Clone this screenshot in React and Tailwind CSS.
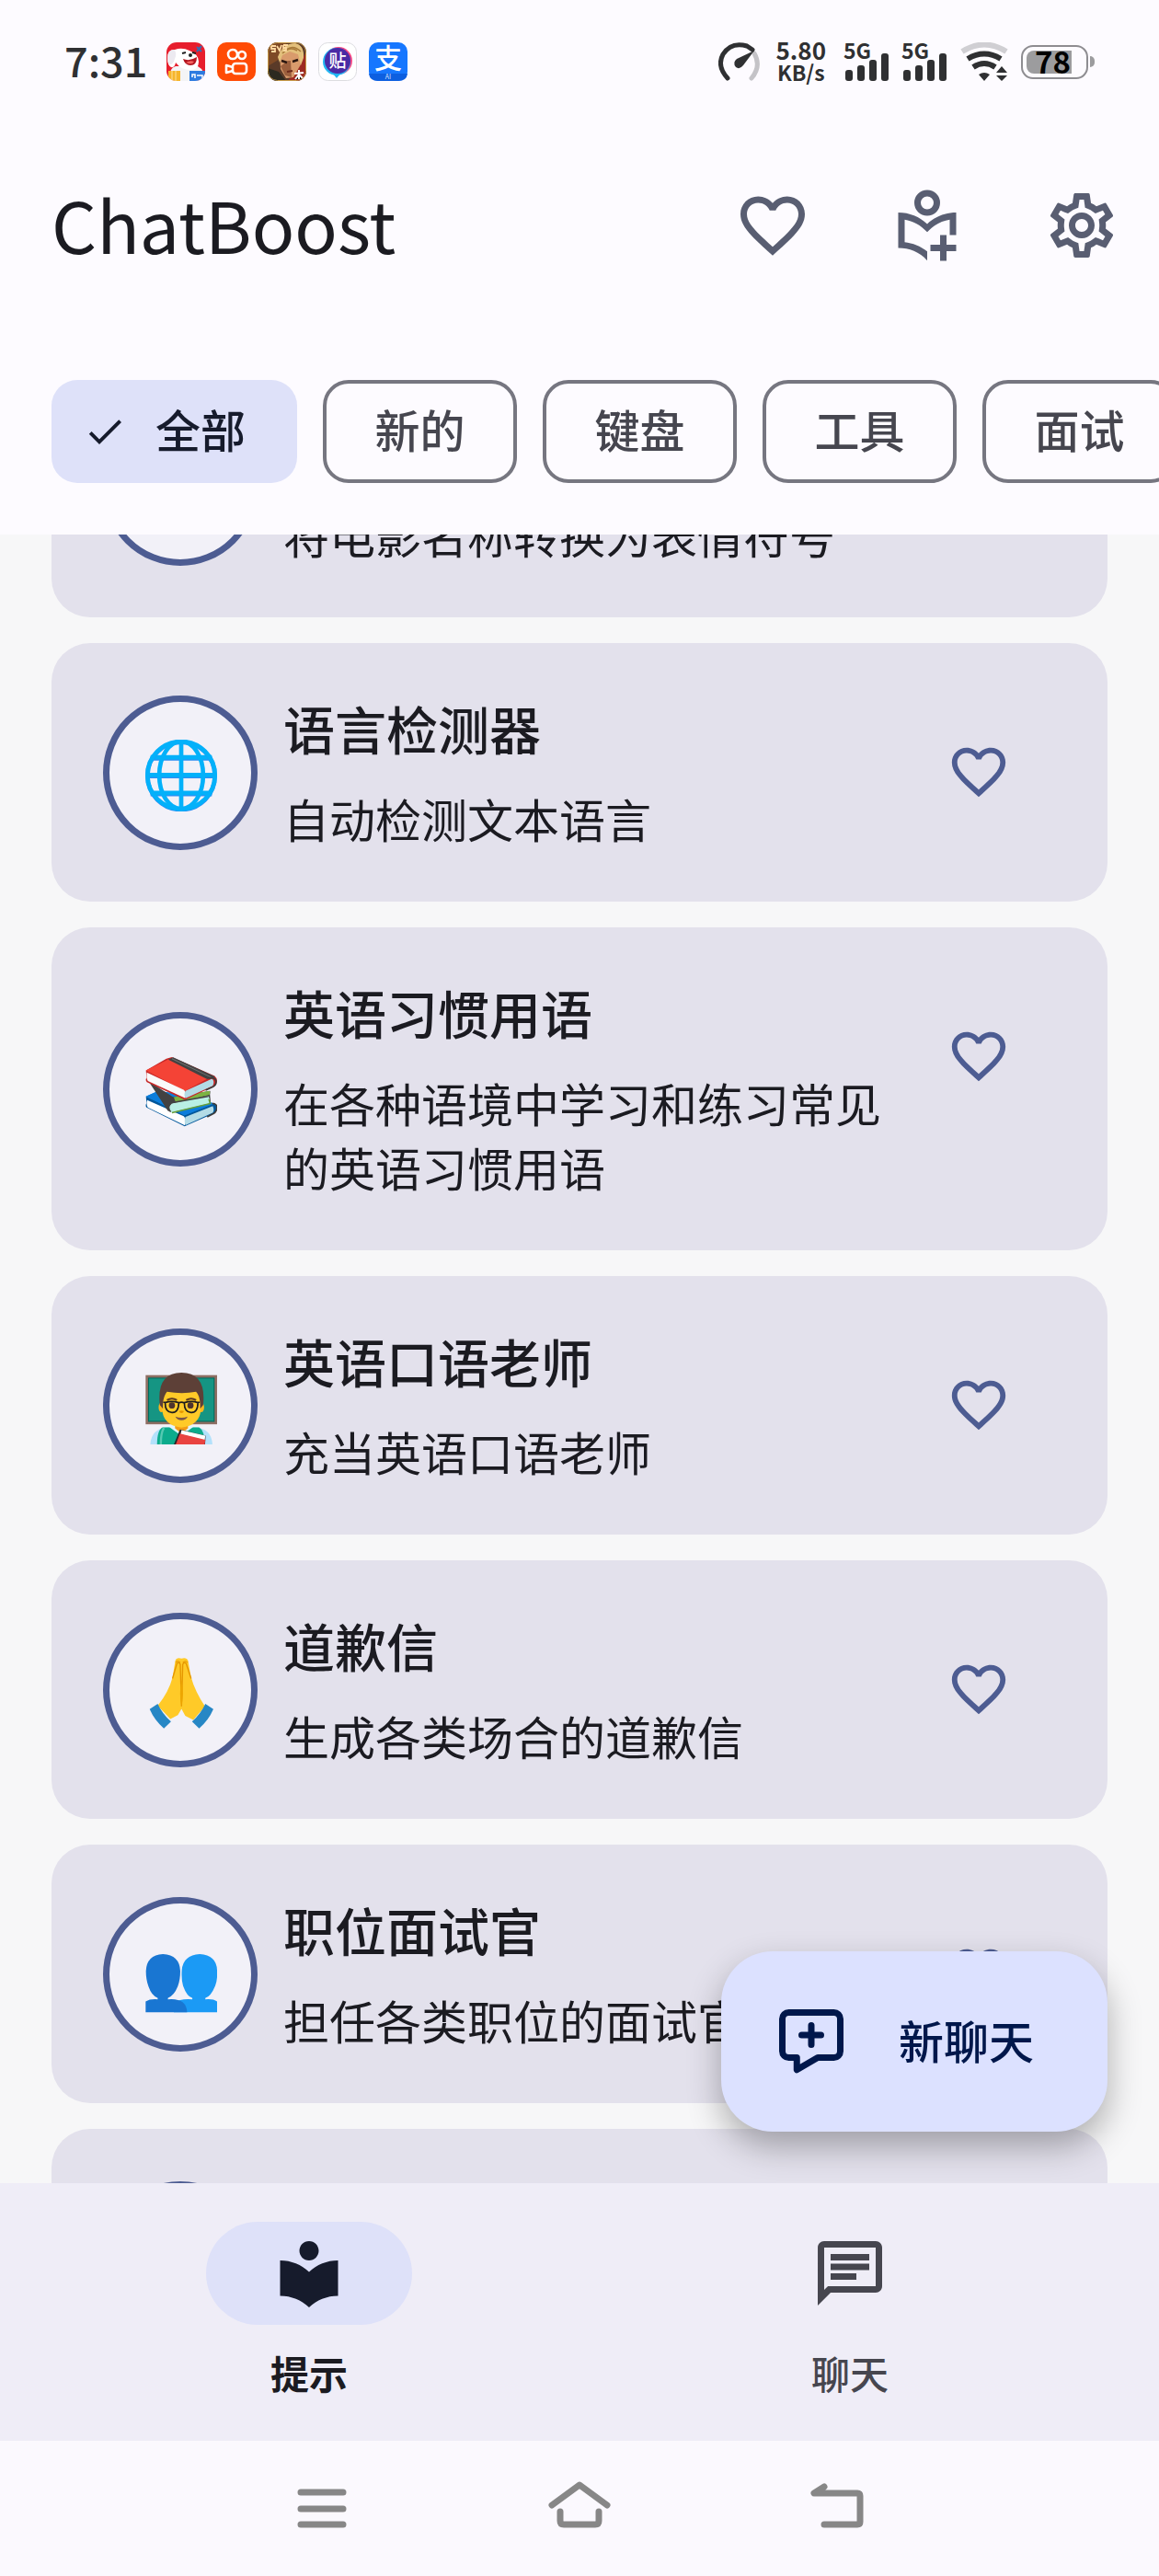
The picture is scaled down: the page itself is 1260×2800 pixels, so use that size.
import React, { useState } from 'react';
import { MdFavoriteBorder, MdOutlineSettings, MdLocalLibrary, MdOutlineChat, MdDone } from 'react-icons/md';

const categories = ['全部', '新的', '键盘', '工具', '面试'];

/* ---------- emoji ---------- */

const GlobeEmoji = () => (
  <svg viewBox="0 0 232 232" className="size-full" fill="none" stroke="#03b1fa" strokeWidth="14">
    <path d="M17 61h198M8 118h216M17 176h198" stroke="#2f8df2" strokeWidth="14" />
    <path d="M17 57h198M8 114h216M17 172h198" strokeWidth="14" />
    <circle cx="116" cy="117" r="109" stroke="#2f8df2" />
    <circle cx="116" cy="115" r="109" />
    <ellipse cx="116" cy="115" rx="71" ry="109" />
    <path d="M116 6v218" />
  </svg>
);

const BooksEmoji = () => (
  <svg viewBox="0 0 232 232" className="size-full">
    <path d="M2 130l40-18 130 20 54 24-98 42z" fill="#0288e5" />
    <path d="M2 130l126 60 92-36q13 2 10 17-2 12-12 16l-91 40L4 166q-5-6 0-14l-2-22z" fill="#01579b" />
    <path d="M2 130l40-18 130 20 50 22-96 38z" fill="#0c7ddb" />
    <path d="M6 142l118 52q7 3 4 30L8 166q-6-10-2-24z" fill="#fff" />
    <path d="M130 196l88-35q6 12 0 22l-88 40q-6-14 0-27z" fill="#b3dbe6" />
    <path d="M216 153q18 0 15 18-2 10-11 15l-20 10" fill="none" stroke="#3c3c3c" strokeWidth="5" />
    <path d="M10 80l80 52 120-20-1 12 2 24-126 33-12-4z" fill="#424242" />
    <path d="M92 132l116-20q3 6-1 13l-108 27z" fill="#7cb342" />
    <path d="M84 153l118-25q10 12 4 25l-122 29q-14-15 0-29z" fill="#b9f0e4" />
    <path d="M82 180q-14-15 2-29l118-21" fill="none" stroke="#424242" strokeWidth="5" />
    <path d="M86 183l124-30-5-14" fill="none" stroke="#689f38" strokeWidth="4" />
    <path d="M2 46L68 8l18-5 138 61q12 10 6 24-2 6-10 10l-92 43L5 84q-6-6-1-14z" fill="#c62828" />
    <path d="M2 46L76 10l126 62-74 41z" fill="#f44336" />
    <path d="M74 11l16-7 136 62-26 8z" fill="#424242" />
    <path d="M86 8l126 60" stroke="#707070" strokeWidth="3" />
    <path d="M5 53l120 56q8 7 3 26L8 80q-6-10-3-27z" fill="#fafafa" />
    <path d="M130 112l86-39q9 10 2 23l-88 40q-7-12 0-24z" fill="#b3dbe6" />
    <path d="M204 71q24-4 25 11 0 12-10 17l-24 11" fill="none" stroke="#3c3c3c" strokeWidth="5" />
  </svg>
);

const TeacherEmoji = () => (
  <svg viewBox="0 0 232 232" className="size-full">
    <rect x="1" y="8" width="231" height="159" fill="#8d6e63" />
    <rect x="9" y="16" width="215" height="143" fill="#00695c" />
    <rect x="12" y="19" width="209" height="137" fill="#159583" />
    <path d="M16 233q2-52 57-57h86q56 4 58 57z" fill="#b3e1fb" />
    <path d="M38 233q0-48 18-56h118q18 10 18 56z" fill="#0cab8c" />
    <path d="M50 233q0-38 10-54" stroke="#56c9b2" strokeWidth="7" fill="none" />
    <path d="M78 176l38 28 38-28-8-9H86z" fill="#e1f5fe" />
    <path d="M96 164h42v16l-21 17-21-17z" fill="#f39c16" />
    <ellipse cx="52" cy="112" rx="9" ry="16" fill="#f9b71e" />
    <ellipse cx="181" cy="112" rx="9" ry="16" fill="#f9b71e" />
    <path d="M55 80q0-58 62-58t62 58v38q0 50-62 60-62-10-62-60z" fill="#ffca28" />
    <path d="M47 105Q35 1 117 0q81 1 70 105l-10 12q2-40-13-55-45 8-94 0-15 18-13 55z" fill="#5d4037" />
    <path d="M70 89q16-10 32 0M132 89q16-10 32 0" stroke="#5d3b22" strokeWidth="6" fill="none" />
    <circle cx="86" cy="106" r="10" fill="#4e342e" />
    <circle cx="146" cy="106" r="10" fill="#4e342e" />
    <path d="M64 97q20-7 44 0 0 33-22 32-22 0-22-32zM126 97q24-7 44 0 0 33-22 32-22 0-22-32zM108 98q9-5 18 0M58 96h8M168 96h8" stroke="#1d1d1d" strokeWidth="5" fill="none" />
    <path d="M109 124q8-3 16 0-2 7-8 7t-8-7z" fill="#e59600" />
    <path d="M97 142q20 8 40 0-6 12-20 12t-20-12z" fill="#795548" />
    <path d="M112 184l83 20-2 29H92z" fill="#29252a" />
    <path d="M117 186l77 18-2 15-78-20z" fill="#fff" />
    <path d="M112 197l82 20-2 16H98z" fill="#e94340" />
  </svg>
);

const PrayEmoji = () => (
  <svg viewBox="0 0 232 232" className="size-full">
    <path d="M40 158Q76 112 88 66L97 12q4-12 20-7 16-5 21 7l10 54q13 46 45 94l-38 44-26-14-12-22-12 20-24 13z" fill="#ffca28" />
    <path d="M88 70q10-34 14-48 7-8 11 2l4 136 4-136q5-10 11-2l16 48" fill="none" stroke="#e59600" strokeWidth="4" />
    <path d="M98 18q8-8 15 0M121 18q8-8 16 0" fill="none" stroke="#e59600" strokeWidth="3" />
    <path d="M117 76q9 42 0 84-9-42 0-84z" fill="#eda600" />
    <path d="M40 152q15 33 43 57l-23 22q-30-25-46-62z" fill="#2787c5" />
    <path d="M194 152q-15 33-43 57l23 22q30-25 46-62z" fill="#2787c5" />
  </svg>
);

const PeopleEmoji = () => (
  <svg viewBox="0 0 232 232" className="size-full">
    <path d="M176 42q54 3 56 52 2 30-6 50-14 34-32 40v4q26-2 38 7v35H92v-32q22-13 60-10v-4q-18-6-30-40-6-20-4-50 4-49 58-52z" fill="#1b9af5" />
    <path d="M57 42q54 3 56 55 0 28-8 49-12 30-32 38v4q60-5 62 42H1v-35q14-9 39-7v-4q-20-8-30-38-8-21-8-49 2-52 55-55z" fill="#1976d2" />
  </svg>
);

const EmojiFilm = () => (
  <svg viewBox="0 0 232 232" className="size-full">
    <rect x="10" y="70" width="212" height="140" rx="10" fill="#424242" />
  </svg>
);

const prompts = [
  { title: '电影转表情', text: '将电影名称转换为表情符号', icon: EmojiFilm },
  { title: '语言检测器', text: '自动检测文本语言', icon: GlobeEmoji },
  { title: '英语习惯用语', text: '在各种语境中学习和练习常见的英语习惯用语', icon: BooksEmoji },
  { title: '英语口语老师', text: '充当英语口语老师', icon: TeacherEmoji },
  { title: '道歉信', text: '生成各类场合的道歉信', icon: PrayEmoji },
  { title: '职位面试官', text: '担任各类职位的面试官', icon: PeopleEmoji },
  { title: '求职信', text: '撰写求职信', icon: EmojiFilm },
];

/* ---------- status bar ---------- */

const AppIcons = () => (
  <div className="flex items-center gap-[13px]">
    <svg viewBox="0 0 42 42" className="size-[42px] overflow-hidden rounded-[11px]">
      <rect width="42" height="42" fill="#e71e2d" />
      <path d="M4 42q-2-14 6-16h24q8 4 7 16z" fill="#f4f4f6" />
      <path d="M1 17Q1 8 9 8q8-3 16 1 10 4 10 12 0 9-9 9-10 0-16-8-1 6-5 5-4-2-4-10z" fill="#fff" />
      <path d="M1 17Q1 8 8 8q4 3 1 10-2 7-6 6-2-2-2-7z" fill="#eceaf0" />
      <path d="M18 18q7 3 15-2 0 9-7 9-6 0-8-7z" fill="#b3151f" />
      <path d="M21 22q5-3 9-1-2 4-9 1z" fill="#f5635f" />
      <path d="M17 12l4-1M28 11l4 1" stroke="#222" strokeWidth="2" />
      <circle cx="26" cy="14" r="2" fill="#222" />
      <path d="M33 5l5 5M38 4l-5 6" stroke="#3a6bb0" strokeWidth="2" />
      <path d="M2 31h13v11H2z" fill="#f6b52c" />
      <path d="M6 31v11M10 31v11" stroke="#fde09a" strokeWidth="1" />
      <path d="M25 31h17v11H25z" fill="#2d7be0" />
      <path d="M28 38v-3h3v4M33 36h6v3" stroke="#fff" strokeWidth="1.5" fill="none" />
    </svg>
    <svg viewBox="0 0 42 42" className="size-[42px]" fill="none" stroke="#fff" strokeWidth="2.6">
      <rect width="42" height="42" rx="10" fill="#ff4b05" stroke="none" />
      <circle cx="17" cy="13" r="5" />
      <circle cx="27" cy="14" r="4" />
      <rect x="17" y="23" width="15" height="11" rx="3" />
      <path d="M17 27l-7-2v8l7-2" strokeLinejoin="round" />
    </svg>
    <svg viewBox="0 0 42 42" className="size-[42px] overflow-hidden rounded-[11px]">
      <rect width="42" height="42" fill="#5a3a28" />
      <path d="M0 0h20v14L0 26z" fill="#7e4a26" />
      <path d="M42 10v32H22l10-12z" fill="#9c2a22" />
      <path d="M0 28l12 4 8 10H0z" fill="#2c2a20" />
      <path d="M13 14l8-8 14 4 1 14-8 14-8 1-6-10z" fill="#d99b6c" />
      <path d="M22 20l3 0 1 18-7-2-5-10z" fill="#9b5f3d" />
      <path d="M11 16Q16 1 30 1q10 2 9 16l-3 8-3-12-9-3-8 4-3 8z" fill="#e3c07c" />
      <path d="M20 8q8-6 16 2M16 12q8-8 16-3" stroke="#a87a3a" strokeWidth="1.5" fill="none" />
      <path d="M15 20l6 2M27 21l6-2" stroke="#2b1710" strokeWidth="2.4" />
      <path d="M21 32l6-1" stroke="#6b2a1c" strokeWidth="2" />
      <path d="M4 4h5M4 4v3h4v3H4M17 3h5M17 3v3h3v3h-3M10 4l3 5 2-6" stroke="#ffd9a0" strokeWidth="1.8" fill="none" />
      <path d="M34 30v10M29 34l10-1M30 40l4-5 5 5" stroke="#fff" strokeWidth="2" />
      <rect x="0.5" y="0.5" width="41" height="41" rx="10" fill="none" stroke="#c79a48" />
    </svg>
    <svg viewBox="0 0 42 42" className="size-[42px]">
      <rect x="0.5" y="0.5" width="41" height="41" rx="10" fill="#fff" stroke="#dcdce0" />
      <circle cx="22" cy="20" r="15" fill="#f54a86" />
      <circle cx="20" cy="21" r="15" fill="#23b7f2" />
      <path d="M15 33l5 6 5-6z" fill="#23b7f2" />
      <circle cx="21" cy="20" r="14" fill="#4a2ba5" />
      <text x="21" y="27" textAnchor="middle" fontSize="19" fontWeight="500" fill="#fff">贴</text>
    </svg>
    <svg viewBox="0 0 42 42" className="size-[42px]">
      <rect width="42" height="42" rx="10" fill="#1677ff" />
      <path d="M0 34h42q-1 8-10 8H10q-9 0-10-8z" fill="#0d5fe0" />
      <text x="21" y="28" textAnchor="middle" fontSize="30" fontWeight="500" fill="#fff">支</text>
      <text x="21" y="40" textAnchor="middle" fontSize="7" fill="#cfe2ff">AI</text>
    </svg>
  </div>
);

const Signal = () => (
  <div className="flex h-[42px] w-[50px] flex-col justify-between">
    <span className="h-[12px] text-[23px] leading-[16px] font-bold">5G</span>
    <svg viewBox="0 0 50 30" className="h-[30px] w-[50px] shrink-0" fill="#2f3032">
      <rect x="2" y="18" width="8" height="12" rx="3" />
      <rect x="15" y="13" width="8" height="17" rx="3" />
      <rect x="28" y="7" width="8" height="23" rx="3" />
      <rect x="41" y="0" width="8" height="30" rx="3" />
    </svg>
  </div>
);

const StatusBar = () => (
  <div className="flex h-[134px] items-center justify-between px-[70px] text-[#2f3032]">
    <div className="flex items-center gap-[21px]">
      <span className="pb-[4px] text-[45px] leading-[56px] font-medium">7:31</span>
      <AppIcons />
    </div>
    <div className="flex items-center">
      <svg viewBox="0 0 46 42" className="mr-[17px] h-[42px] w-[46px]" fill="none" strokeWidth="5" strokeLinecap="round">
        <path d="M39 12q8 14-3 27" stroke="#c4c3c7" />
        <path d="M10 39Q-2 26 5 13 14-1 31 4l6 4" stroke="#2f3032" />
        <path d="M39 9L27 25q-4 5-8 2-4-5 1-9z" fill="#2f3032" stroke="none" />
      </svg>
      <div className="mr-[19px] flex flex-col items-center pb-[2px] text-[26px] leading-[24px] font-bold">
        <span>5.80</span>
        <span className="text-[23px]">KB/s</span>
      </div>
      <div className="mr-[14px] flex gap-[13px]">
        <Signal />
        <Signal />
      </div>
      <svg viewBox="0 0 52 42" className="mr-[14px] h-[42px] w-[52px]" fill="none" strokeWidth="6">
        <path d="M2 10Q26-5 50 10" stroke="#d0cfd3" />
        <path d="M8 18Q26 7 44 18M14 27q12-8 24 0" stroke="#2f3032" />
        <path d="M20 35q6-4 12 0l-6 7zM39 33l6-7 6 7zM39 36h12l-6 6z" fill="#2f3032" stroke="none" />
      </svg>
      <div className="flex items-center">
        <div className="flex h-[37px] w-[73px] items-center rounded-[13px] border-2 border-[#8e8d91] p-[4px]">
          <div className="flex h-full w-[49px] items-center justify-center rounded-l-[8px] bg-[#9c9c9e]">
            <span className="pb-[3px] pl-[8px] text-[33px] leading-[28px] font-bold text-black">78</span>
          </div>
        </div>
        <div className="ml-[2px] h-[12px] w-[5px] rounded-r-full bg-[#9c9c9e]" />
      </div>
    </div>
  </div>
);

const AddPromptIcon = () => (
  <svg viewBox="0 0 24 24" className="size-[84px]" fill="currentColor">
    <path d="M12 1a4 4 0 1 0 0 8 4 4 0 0 0 0-8zm0 2a2 2 0 1 1 0 4 2 2 0 0 1 0-4z" />
    <path d="M3 8c3.500 0 6.640 1.350 9 3.550C14.360 9.350 17.500 8 21 8v7h-2v-4.800c-2.600.4-5 1.700-7 3.900-2-2.200-4.400-3.500-7-3.900v7c2.500.3 4.900 1.200 7 2.900v2.800C9.600 20.200 6.400 19 3 19z" />
    <path d="M16 15h2v3h3v2h-3v3h-2v-3h-3v-2h3z" />
  </svg>
);

const NewChatIcon = () => (
  <svg viewBox="0 0 24 24" className="size-[84px]" fill="none" stroke="currentColor" strokeWidth="2" strokeLinecap="round" strokeLinejoin="round">
    <path d="M5 3h14a2 2 0 0 1 2 2v10a2 2 0 0 1-2 2h-5l-6.500 3.800V17H5a2 2 0 0 1-2-2V5a2 2 0 0 1 2-2z" />
    <path d="M12 7v6M9 10h6" />
  </svg>
);

const PromptCard = ({ title, text, icon: Icon }) => (
  <article className="flex items-center gap-7 rounded-[42px] bg-[#e3e1ec] px-14 py-[50px]">
    <div className="flex size-[168px] shrink-0 items-center justify-center rounded-full border-[7px] border-[#4d5c92] bg-[#f2f1f8]">
      <div className="mt-[6px] ml-[2px] size-[78px]">
        <Icon />
      </div>
    </div>
    <div className="min-w-0 flex-1 pb-[6px] text-[#1b1b21]">
      <h2 className="text-[56px] leading-[84px] font-medium">{title}</h2>
      <p className="mt-[21px] text-[50px] leading-[70px]">{text}</p>
    </div>
    <button aria-label={`收藏 ${title}`} className="-ml-7 flex h-[180px] w-[168px] shrink-0 items-center justify-center self-start text-[#4d5c92]">
      <MdFavoriteBorder className="size-[70px]" />
    </button>
  </article>
);

const App = () => {
  const [category, setCategory] = useState('全部');
  const [tab, setTab] = useState('prompts');

  return (
    <div className="flex h-screen flex-col overflow-hidden bg-[#f7f7f8] font-['Noto_Sans_CJK_SC',sans-serif]">
      <header className="shrink-0 bg-[#fdfbff]">
        <StatusBar />
        <div className="flex h-[222px] items-center justify-between pl-14">
          <h1 className="pb-[4px] text-[77px] leading-[112px] text-[#1b1b21]">ChatBoost</h1>
          <div className="flex text-[#595e72]">
            <button aria-label="收藏" className="flex size-[168px] items-center justify-center">
              <MdFavoriteBorder className="size-[84px]" />
            </button>
            <button aria-label="添加提示" className="flex size-[168px] items-center justify-center">
              <AddPromptIcon />
            </button>
            <button aria-label="设置" className="flex size-[168px] items-center justify-center">
              <MdOutlineSettings className="size-[84px]" />
            </button>
          </div>
        </div>
        <div className="flex gap-7 overflow-hidden px-14 pt-[57px] pb-14">
          {categories.map((name) => (
            <button
              key={name}
              onClick={() => setCategory(name)}
              className={`flex h-28 shrink-0 items-center justify-center rounded-[28px] text-[49px] leading-[70px] font-medium ${
                category === name
                  ? 'w-[267px] gap-[31px] bg-[#dee1f9] pr-[22px] text-[#161b2c]'
                  : 'w-[211px] border-4 border-[#767680] text-[#46464f]'
              }`}
            >
              {category === name && <MdDone className="size-[48px]" />}
              <span className="pb-[6px]">{name}</span>
            </button>
          ))}
        </div>
      </header>

      <main className="relative min-h-0 flex-1 overflow-hidden">
        {/* list is scrolled past the top of the first card */}
        <div className="-mt-[191px] flex flex-col gap-7 px-14">
          {prompts.map((p) => (
            <PromptCard key={p.title} {...p} />
          ))}
        </div>
        <button className="absolute right-14 bottom-14 flex h-[196px] w-[420px] items-center gap-[53px] rounded-[56px] bg-[#dce1ff] pl-14 text-[49px] font-medium text-[#00174b] shadow-[0_16px_36px_rgba(0,0,0,0.3)]">
          <NewChatIcon />
          <span className="pb-[4px]">新聊天</span>
        </button>
      </main>

      <nav className="z-10 grid h-[280px] shrink-0 grid-cols-2 gap-7 bg-[#efedf7] px-14 pt-[42px]">
        <button onClick={() => setTab('prompts')} className="flex flex-col items-center gap-[22px] text-[#1b1b21]">
          <span className={`flex h-28 w-56 items-center justify-center rounded-full ${tab === 'prompts' ? 'bg-[#dee1f9]' : ''}`}>
            <MdLocalLibrary className="size-[84px] text-[#161b2c]" />
          </span>
          <span className="text-[42px] leading-[60px] font-bold">提示</span>
        </button>
        <button onClick={() => setTab('chats')} className="flex flex-col items-center gap-[22px] text-[#46464f]">
          <span className={`flex h-28 w-56 items-center justify-center rounded-full ${tab === 'chats' ? 'bg-[#dee1f9]' : ''}`}>
            <MdOutlineChat className="size-[84px]" />
          </span>
          <span className="text-[42px] leading-[60px] font-medium">聊天</span>
        </button>
      </nav>

      <div className="flex h-[147px] shrink-0 items-center justify-center gap-[196px] bg-[#fbf9fe] pt-[4px] text-[#878787]">
        <button aria-label="最近任务">
          <svg viewBox="0 0 84 84" className="size-[84px]" fill="none" stroke="currentColor" strokeWidth="7" strokeLinecap="round">
            <path d="M19 22h46M19 40h46M19 57h46" />
          </svg>
        </button>
        <button aria-label="主屏幕">
          <svg viewBox="0 0 84 84" className="size-[84px]" fill="none" stroke="currentColor" strokeWidth="7" strokeLinecap="round" strokeLinejoin="round">
            <path d="M12 36l30-22 30 22M21 43v10q0 4 4 4h34q4 0 4-4V43" />
          </svg>
        </button>
        <button aria-label="返回">
          <svg viewBox="0 0 84 84" className="size-[84px]" fill="none" stroke="currentColor" strokeWidth="7" strokeLinecap="round" strokeLinejoin="round">
            <path d="M28 16l-11 7h47q3 0 3 3v28q0 3-3 3H28" />
          </svg>
        </button>
      </div>
    </div>
  );
};

export default App;
